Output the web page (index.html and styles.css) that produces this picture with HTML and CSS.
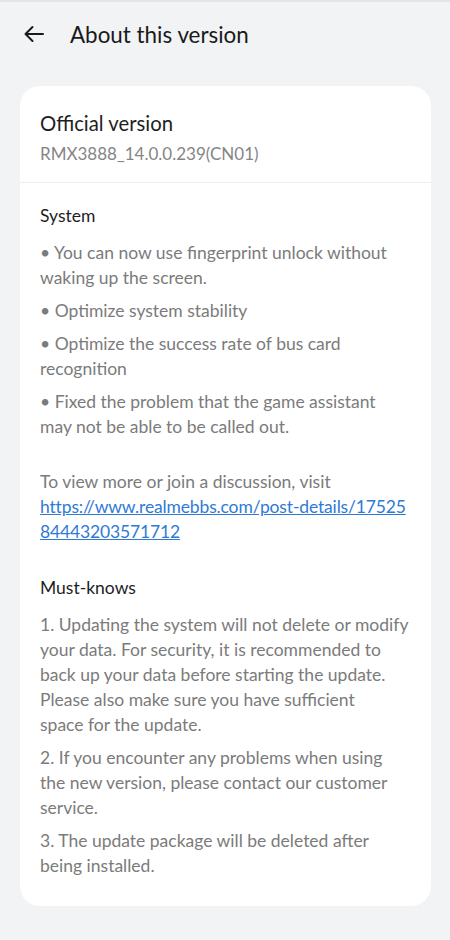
FILE: index.html
```html
<!DOCTYPE html>
<html>
<head>
<meta charset="utf-8">
<link rel="stylesheet" href="styles.css">
</head>
<body>
<div class="topline"></div>
<header class="bar">
  <svg class="back" width="24" height="24" viewBox="0 0 24 24" fill="none" stroke="#1a1a1a" stroke-width="2" stroke-linecap="round" stroke-linejoin="round"><path d="M21 12H3.5M10.5 5L3.5 12L10.5 19"/></svg>
  <h1 class="title">About this version</h1>
</header>
<main class="card">
  <section class="head">
    <div class="ver-name">Official version</div>
    <div class="ver-code">RMX3888_14.0.0.239(CN01)</div>
  </section>
  <section class="body">
    <h2 class="sec">System</h2>
    <p class="item">• You can now use fingerprint unlock without waking up the screen.</p>
    <p class="item">• Optimize system stability</p>
    <p class="item">• Optimize the success rate of bus card recognition</p>
    <p class="item">• Fixed the problem that the game assistant may not be able to be called out.</p>
    <p class="item visit">To view more or join a discussion, visit <a class="link" href="#">https://www.realmebbs.com/post-details/1752584443203571712</a></p>
    <h2 class="sec must">Must-knows</h2>
    <p class="item">1. Updating the system will not delete or modify your data. For security, it is recommended to back up your data before starting the update. Please also make sure you have sufficient<br>space for the update.</p>
    <p class="item">2. If you encounter any problems when using the new version, please contact our customer service.</p>
    <p class="item">3. The update package will be deleted after being installed.</p>
  </section>
</main>
</body>
</html>
```
FILE: styles.css
```css
* { box-sizing: border-box; }
html, body { margin: 0; padding: 0; }
body {
  background: #f2f3f5;
  font-family: "Lato", "Noto Sans", sans-serif;
  width: 450px;
  min-height: 940px;
}
.topline { height: 2px; background: #e4e5e8; }
.bar {
  display: flex;
  align-items: center;
  height: 64px;
  padding-left: 22px;
  gap: 24px;
}
.back { flex: none; }
.title {
  margin: 0;
  font-size: 22.4px;
  font-weight: 400;
  color: #1a1a1a;
}
.card {
  margin: 20px 19px 0 20px;
  background: #fff;
  border-radius: 20px;
  padding-bottom: 20px;
}
.head {
  padding: 22px 20px 12px;
  border-bottom: 1px solid #eeeeee;
}
.ver-name { font-size: 20.3px; color: #1e1e1e; line-height: 30px; }
.ver-code { font-size: 17px; color: #858585; line-height: 32px; }
.body { padding: 20px 20px 0; }
.sec {
  margin: 0 0 12px;
  font-size: 17.5px;
  font-weight: 400;
  color: #1e1e1e;
  line-height: 25px;
}
.must { margin-top: 31px; }
.item {
  margin: 0 0 8px;
  font-size: 17.5px;
  line-height: 25px;
  color: #7b7b7b;
}
.visit { margin-top: 30px; }
.link {
  display: block;
  color: #2f7ad6;
  text-decoration: underline;
  word-break: break-all;
  letter-spacing: -0.15px;
}
```
